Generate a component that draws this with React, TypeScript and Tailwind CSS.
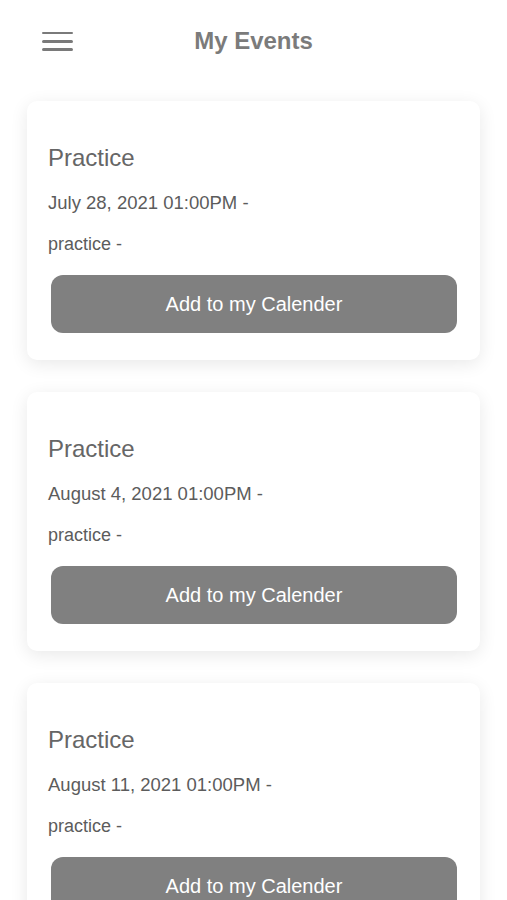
const events = [
  { title: 'Practice', date: 'July 28, 2021 01:00PM -', note: 'practice -' },
  { title: 'Practice', date: 'August 4, 2021 01:00PM -', note: 'practice -' },
  { title: 'Practice', date: 'August 11, 2021 01:00PM -', note: 'practice -' },
]

function MenuIcon() {
  return (
    <div className="flex w-[31px] flex-col gap-[5.8px]">
      <span className="h-[2.4px] w-full rounded-full bg-[#7a7a7a]" />
      <span className="h-[2.4px] w-full rounded-full bg-[#7a7a7a]" />
      <span className="h-[2.4px] w-full rounded-full bg-[#7a7a7a]" />
    </div>
  )
}

function EventCard({ title, date, note }: { title: string; date: string; note: string }) {
  return (
    <div className="flex h-[259px] flex-col rounded-[10px] bg-white px-[21px] pt-[43px] shadow-[0_4px_18px_rgba(0,0,0,0.09)]">
      <h3 className="text-[24px] leading-[28px] text-[#666666]">{title}</h3>
      <p className="mt-[20px] text-[18.5px] leading-[22px] text-[#5c5c5c]">{date}</p>
      <p className="mt-[19px] text-[18px] leading-[22px] text-[#5c5c5c]">{note}</p>
      <button className="mx-[3px] mt-[20px] h-[58px] w-[406px] rounded-[12px] bg-[#808080] text-[20px] text-white">
        Add to my Calender
      </button>
    </div>
  )
}

export default function App() {
  return (
    <div className="min-h-[900px] bg-white font-['Liberation_Sans',Arial,sans-serif]">
      <header className="relative flex h-[82px] items-center justify-center">
        <div className="absolute left-[42px] top-[32px]">
          <MenuIcon />
        </div>
        <h1 className="text-[24px] font-bold text-[#7b7b7b]">My Events</h1>
      </header>

      <main className="flex flex-col gap-[32px] px-[27px] pt-[19px] pb-10">
        {events.map((event) => (
          <EventCard key={event.date} {...event} />
        ))}
      </main>
    </div>
  )
}
